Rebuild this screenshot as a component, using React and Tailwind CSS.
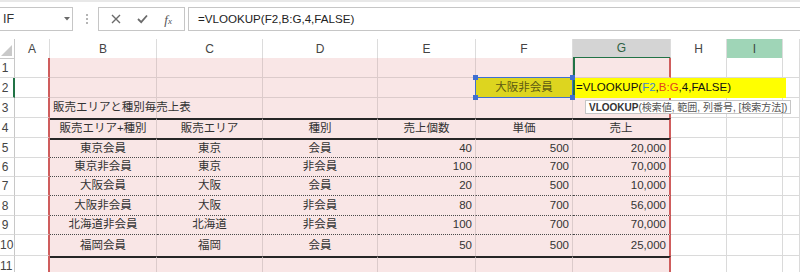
const COLS = 'grid grid-cols-[15px_35px_107px_106px_115px_98px_97px_98px_56px_56px_17px]';
const ROW_H = ['h-[20px]', 'h-[20px]', 'h-[20px]', 'h-[20px]', 'h-[20px]', 'h-[19px]', 'h-[19px]', 'h-[20px]', 'h-[19px]', 'h-[21px]', 'h-[20px]'];
const LETTERS = ['A', 'B', 'C', 'D', 'E', 'F', 'G', 'H', 'I', ''];

const SALES = [
  ['東京会員', '東京', '会員', '40', '500', '20,000'],
  ['東京非会員', '東京', '非会員', '100', '700', '70,000'],
  ['大阪会員', '大阪', '会員', '20', '500', '10,000'],
  ['大阪非会員', '大阪', '非会員', '80', '700', '56,000'],
  ['北海道非会員', '北海道', '非会員', '100', '700', '70,000'],
  ['福岡会員', '福岡', '会員', '50', '500', '25,000'],
];

// what sits in a cell: [text, align]
function content(r, c) {
  if (r === 3 && c === 1) return ['販売エリアと種別毎売上表', 'left'];
  if (r === 4 && c >= 1 && c <= 6) return [['販売エリア+種別', '販売エリア', '種別', '売上個数', '単価', '売上'][c - 1], 'center'];
  if (r >= 5 && r <= 10 && c >= 1 && c <= 6) return [SALES[r - 5][c - 1], c <= 3 ? 'center' : 'right'];
  return ['', 'center'];
}

function cellClass(r, c) {
  const pink = c >= 1 && c <= 6;
  const cls = ['relative flex items-center whitespace-nowrap'];
  cls.push(pink ? 'bg-[#f9e6e6]' : 'bg-white');

  // right edge: red page lines left of B and right of G
  if (c === 0 || c === 6) cls.push('border-r-2 border-r-[#cf5d5d]');
  else cls.push('border-r', pink ? 'border-r-[#dccbcb]' : 'border-r-[#dadada]');

  // bottom edge
  if (pink && (r === 3 || r === 4 || r === 10)) cls.push('border-b-0');
  else if (pink && r >= 5 && r <= 9) cls.push('border-b border-b-[#4a4a4a] [border-bottom-style:dotted]');
  else cls.push('border-b', pink ? 'border-b-[#dccbcb]' : 'border-b-[#dadada]');

  if (pink && (r === 4 || r === 5 || r === 11)) cls.push('border-t-2 border-t-[#262626]');
  // the title spills over the empty cells to its right
  if (r === 3 && c === 1) cls.push('z-10');
  return cls.join(' ');
}

const ALIGN = { left: 'justify-start pl-[3px]', center: 'justify-center', right: 'justify-end pr-[3px]' };

function FormulaBar() {
  return (
    <div className="h-[39px] bg-white">
      <div className="h-[2px] bg-[#e8e8e8]" />
      <div className="mt-[5px] flex h-[24px] items-stretch">
        <div className="flex w-[73px] items-center justify-between border border-l-0 border-[#c6c6c6] pl-[3px] pr-[2px] text-[12.5px] text-[#333]">
          <span>IF</span>
          <svg width="6" height="4" viewBox="0 0 6 4"><path d="M0 0 L6 0 L3 3.5 Z" fill="#6a6a6a" /></svg>
        </div>
        <div className="flex w-[25px] flex-col items-center justify-center gap-[2px] pl-[3px]">
          <span className="h-[2px] w-[2px] bg-[#b5b5b5]" />
          <span className="h-[2px] w-[2px] bg-[#b5b5b5]" />
          <span className="h-[2px] w-[2px] bg-[#b5b5b5]" />
        </div>
        <div className="flex w-[87px] items-center justify-around border border-[#c6c6c6] px-[4px]">
          <svg width="10" height="10" viewBox="0 0 10 10"><path d="M1 1 L9 9 M9 1 L1 9" stroke="#6b6b6b" strokeWidth="1.4" /></svg>
          <svg width="11" height="10" viewBox="0 0 11 10"><path d="M1 5 L4.2 8.2 L10 1.5" fill="none" stroke="#6b6b6b" strokeWidth="1.8" /></svg>
          <span className="font-['Liberation_Serif'] text-[13px] italic leading-none text-[#555]">f<span className="text-[9px]">x</span></span>
        </div>
        <div className="ml-[3px] flex flex-1 items-center border border-r-0 border-[#c6c6c6] pl-[9px] text-[11.6px] text-[#222]">
          =VLOOKUP(F2,B:G,4,FALSE)
        </div>
      </div>
    </div>
  );
}

function ColumnHeaders() {
  return (
    <div className={`${COLS} h-[19px]`}>
      <div className="relative border-r border-r-[#c8c8c8] border-b border-b-[#c8c8c8]">
        <svg className="absolute bottom-[2px] right-[2px]" width="11" height="11" viewBox="0 0 11 11"><path d="M11 0 L11 11 L0 11 Z" fill="#c9c9c9" /></svg>
      </div>
      {LETTERS.map((l, i) => {
        let cls = 'flex items-center justify-center text-[12px] border-r border-r-[#dcdcdc] ';
        if (l === 'G') cls += 'bg-[#d4d4d4] text-[#2d6141] border-b-2 border-b-[#217346]';
        else if (l === 'I') cls += 'bg-[#9fd5b7] text-[#3c4a42] border-b border-b-[#c8c8c8]';
        else cls += 'bg-white text-[#444] border-b border-b-[#c8c8c8]';
        return <div key={i} className={cls}>{l}</div>;
      })}
    </div>
  );
}

function Editor() {
  return (
    <>
      <div className="absolute left-0 top-0 z-20 flex h-[20px] w-[213px] items-center border-l-2 border-l-[#217346] bg-[#ffff00] pl-[1px] text-[11.5px] text-[#111]">
        =VLOOKUP(<span className="text-[#3f86cc]">F2</span>,<span className="text-[#e2431e]">B:G</span>,4,FALSE)
      </div>
      <div className="absolute left-[12px] top-[22px] z-20 flex h-[14px] items-center border border-[#c6c6c6] bg-white px-[3px] text-[10px] text-[#555]">
        <b className="text-[#333]">VLOOKUP</b>(検索値, 範囲, 列番号, [検索方法])
      </div>
    </>
  );
}

function SelectedLookup() {
  return (
    <div className="absolute left-[-1px] top-[-1px] z-30 h-[21px] w-[98px] border border-[#3f6fd1]">
      <span className="absolute left-[-3px] top-[-3px] h-[5px] w-[5px] bg-[#3f6fd1]" />
      <span className="absolute right-[-3px] top-[-3px] h-[5px] w-[5px] bg-[#3f6fd1]" />
      <span className="absolute bottom-[-3px] left-[-3px] h-[5px] w-[5px] bg-[#3f6fd1]" />
      <span className="absolute bottom-[-3px] right-[-3px] h-[5px] w-[5px] bg-[#3f6fd1]" />
    </div>
  );
}

function Row({ r }) {
  return (
    <div className={`${COLS} ${ROW_H[r - 1]}`}>
      <div className={`flex items-center border-b border-b-[#dadada] bg-white text-[12px] text-[#444] ${r === 2 ? 'border-r-2 border-r-[#217346]' : 'border-r border-r-[#c8c8c8]'}`}>
        <span className={`flex ${r >= 10 ? 'justify-start' : 'w-[10px] justify-center'}`}>{r}</span>
      </div>
      {Array.from({ length: 10 }, (_, c) => {
        const [text, align] = content(r, c);
        if (r === 2 && c === 5) {
          return (
            <div key={c} className={`${cellClass(r, c)} justify-center !bg-[#ddd51f] text-[#5d5a12]`}>
              大阪非会員
              <SelectedLookup />
            </div>
          );
        }
        return (
          <div key={c} className={`${cellClass(r, c)} ${ALIGN[align]}`}>
            {text}
            {r === 1 && c === 6 && <span className="absolute left-0 top-0 h-full w-[2px] bg-[#217346]" />}
            {r === 2 && c === 6 && <Editor />}
          </div>
        );
      })}
    </div>
  );
}

export default function App() {
  return (
    <div className="h-[272px] w-[800px] overflow-hidden bg-white font-['Liberation_Sans','Noto_Sans_CJK_JP',sans-serif] text-[11.5px] text-[#333]">
      <FormulaBar />
      <ColumnHeaders />
      {Array.from({ length: 11 }, (_, i) => <Row key={i} r={i + 1} />)}
    </div>
  );
}
